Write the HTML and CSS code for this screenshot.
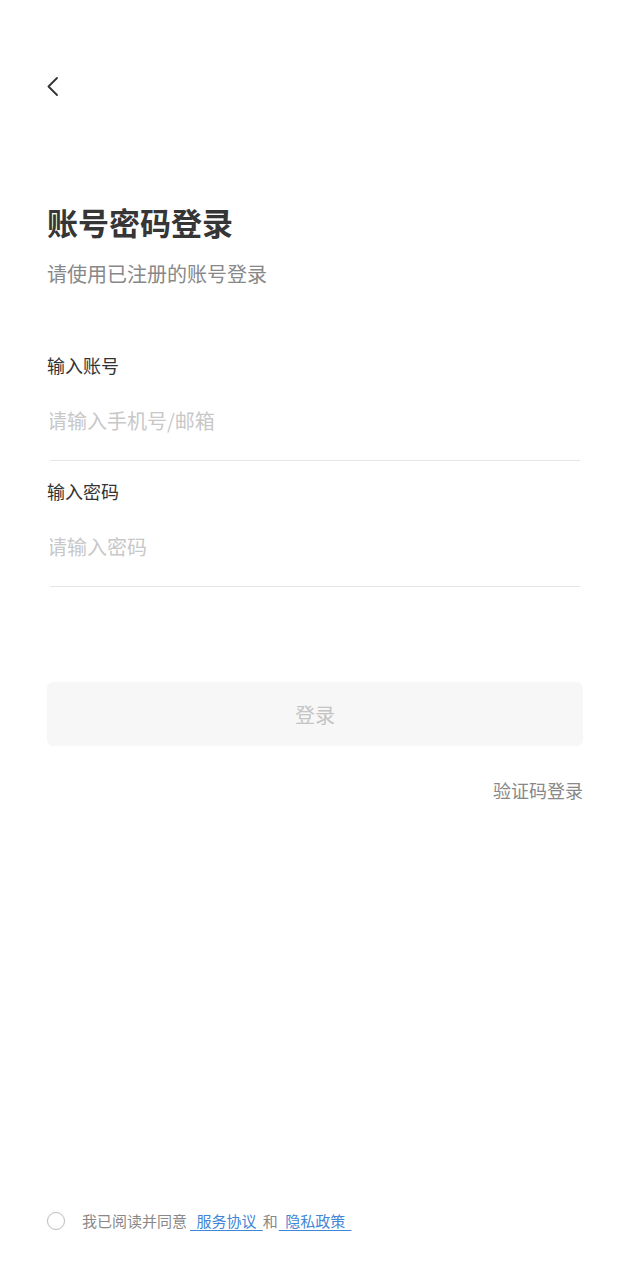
FILE: index.html
```html
<!DOCTYPE html>
<html lang="zh-CN">
<head>
    <meta charset="UTF-8">
    <meta name="viewport" content="width=device-width, initial-scale=1.0">
    <title>账号密码登录</title>
    <link rel="stylesheet" href="styles.css">
</head>
<body>
    <div class="page">
        <div class="back">
            <svg width="12" height="20" viewBox="0 0 12 20">
                <path d="M10 1 L1.5 9.5 L10 18" fill="none" stroke="#333" stroke-width="1.8" stroke-linecap="round" stroke-linejoin="round"/>
            </svg>
        </div>

        <h1 class="title">账号密码登录</h1>
        <p class="subtitle">请使用已注册的账号登录</p>

        <form class="login-form">
            <label class="field-label" for="account">输入账号</label>
            <input class="field-input" type="text" id="account" placeholder="请输入手机号/邮箱">

            <label class="field-label second" for="password">输入密码</label>
            <input class="field-input" type="password" id="password" placeholder="请输入密码">

            <button class="login-btn" type="submit">登录</button>
        </form>

        <div class="switch">验证码登录</div>

        <div class="agreement">
            <span class="radio"></span>
            <span class="agree-text">我已阅读并同意<a class="link first" href="#"> 服务协议 </a>和<a class="link" href="#"> 隐私政策 </a></span>
        </div>
    </div>
</body>
</html>
```

FILE: styles.css
```css
body {
    margin: 0;
    padding: 0;
    background: #fff;
    font-family: "Noto Sans CJK SC", "Noto Sans", sans-serif;
    color: #333;
}
.page {
    display: flex;
    flex-direction: column;
    min-height: 1280px;
    box-sizing: border-box;
    padding: 0 47px 47px 47px;
}
.back {
    margin-top: 77px;
    height: 20px;
    line-height: 0;
}
.title {
    margin: 105px 0 0 0;
    font-size: 31px;
    line-height: 40px;
    font-weight: bold;
    color: #363636;
}
.subtitle {
    margin: 18px 0 0 0;
    font-size: 20px;
    line-height: 28px;
    color: #888;
}
.login-form {
    display: flex;
    flex-direction: column;
    margin-top: 64px;
}
.field-label {
    font-size: 18px;
    line-height: 26px;
    color: #333;
}
.field-label.second {
    margin-top: 17px;
}
.field-input {
    height: 83px;
    box-sizing: border-box;
    margin: 0 3px;
    padding: 3px 0 0 0;
    text-indent: -3px;
    border: none;
    border-bottom: 1px solid #e6e6e6;
    outline: none;
    font-family: inherit;
    font-size: 20px;
    color: #333;
    background: transparent;
}
.field-input::placeholder {
    color: #c8c8c8;
}
.login-btn {
    margin-top: 95px;
    height: 64px;
    border: none;
    border-radius: 6px;
    background: #f7f7f7;
    font-family: inherit;
    font-size: 20px;
    color: #c4c4c4;
}
.switch {
    margin-top: 31px;
    align-self: flex-end;
    font-size: 18px;
    line-height: 26px;
    color: #888;
}
.agreement {
    margin-top: auto;
    display: flex;
    align-items: center;
    gap: 17px;
    height: 24px;
}
.radio {
    width: 16px;
    height: 16px;
    border: 1.3px solid #bbb;
    border-radius: 50%;
}
.agree-text {
    font-size: 15px;
    line-height: 24px;
    color: #888;
    white-space: pre;
}
.link {
    margin-left: 1px;
    color: #3f86d6;
    text-decoration: underline;
    text-underline-offset: 3px;
    word-spacing: 3px;
}
.link.first {
    margin-left: 3px;
}
```
